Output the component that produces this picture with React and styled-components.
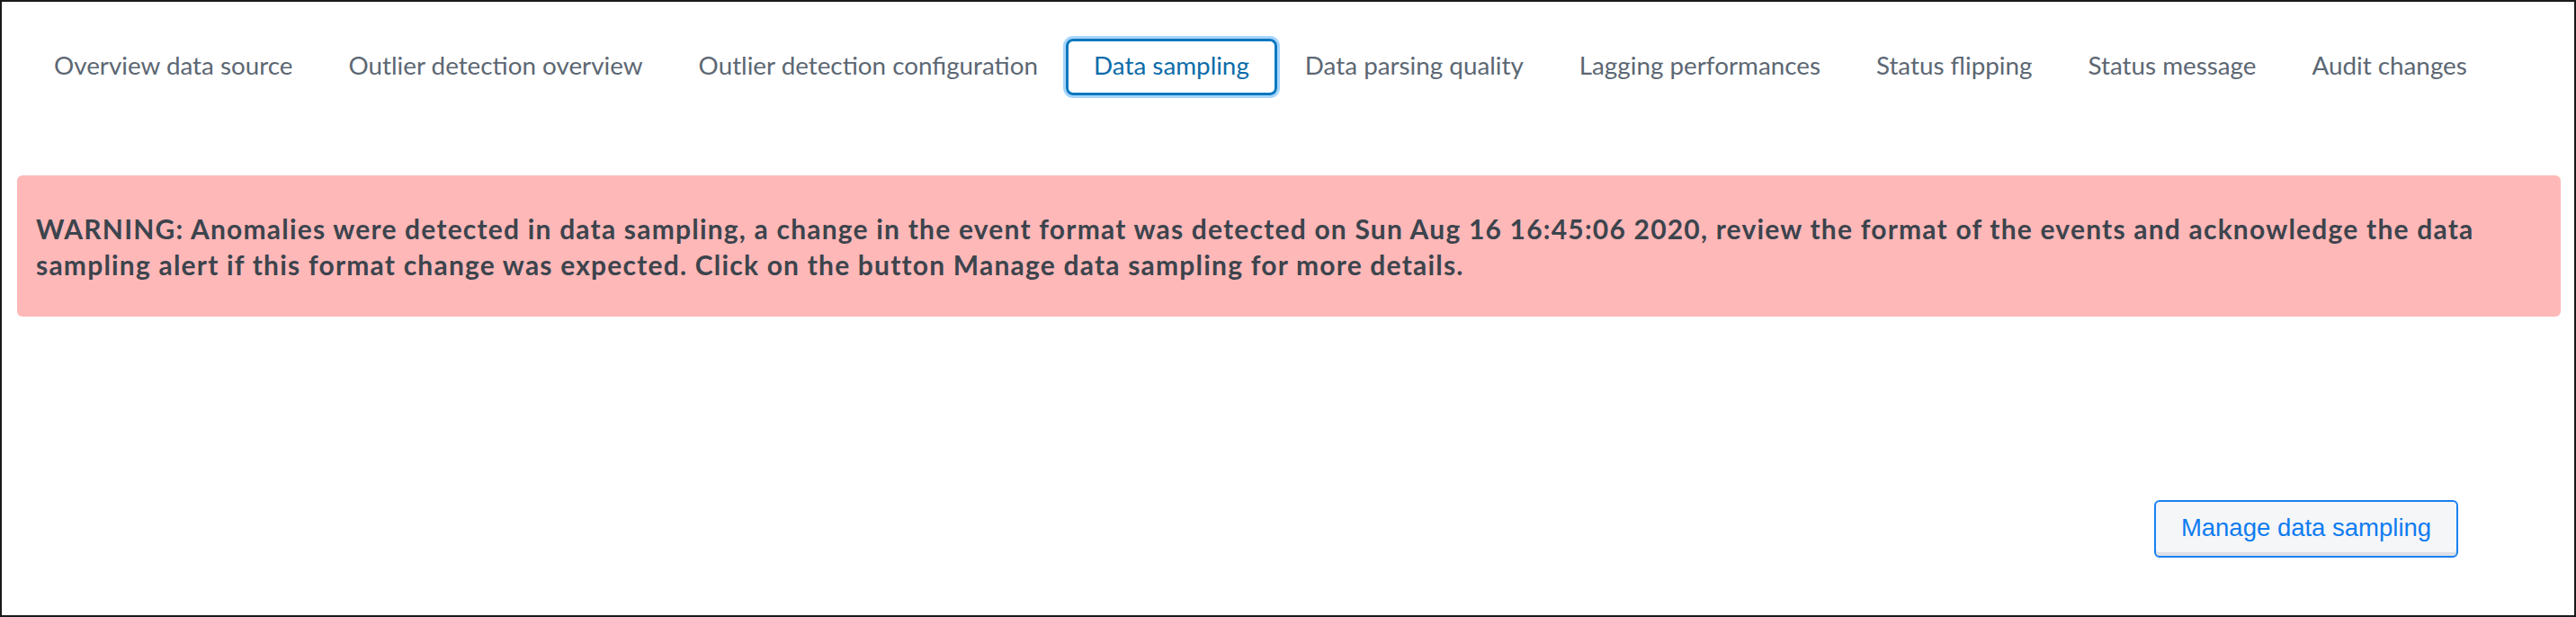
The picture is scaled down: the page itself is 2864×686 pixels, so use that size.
import React from "react";
import styled, { createGlobalStyle } from "styled-components";

const GlobalStyle = createGlobalStyle`
  html, body {
    margin: 0;
    padding: 0;
    background: #fff;
  }
`;

const Page = styled.div`
  box-sizing: border-box;
  width: 2864px;
  height: 686px;
  border: 2px solid #1a1a1a;
  background: #fff;
  font-family: Lato, "Open Sans", sans-serif;
  display: flex;
  flex-direction: column;
`;

const TabBar = styled.nav`
  display: flex;
  align-items: center;
  padding: 41px 0 0 27px;
`;

const Tab = styled.div`
  box-sizing: border-box;
  height: 63px;
  padding: 0 28px 4px;
  display: flex;
  align-items: center;
  font-size: 27.8px;
  color: ${(props) => (props.active ? "#0b6ca9" : "#5c6773")};
  border: 3px solid ${(props) => (props.active ? "#0a78bf" : "transparent")};
  border-radius: 8px;
  box-shadow: ${(props) =>
    props.active ? "0 0 0 3px rgba(94, 178, 250, 0.55)" : "none"};
  white-space: nowrap;
  cursor: pointer;
`;

const Alert = styled.div`
  margin: 89px 15px 0 17px;
  padding: 39px 22px 38px 21px;
  background: #ffb8b8;
  border-radius: 6px;
  color: #3c444d;
  font-weight: 700;
  font-size: 30px;
  letter-spacing: 1.2px;
  line-height: 40px;
`;

const Actions = styled.div`
  display: flex;
  justify-content: flex-end;
  padding: 0 129px 0 0;
  margin-top: 204px;
`;

const Button = styled.button`
  box-sizing: border-box;
  width: 338px;
  height: 64px;
  background: #f5f6f8;
  border: 2px solid #1a80f2;
  border-radius: 6px;
  box-shadow: inset 0 -4px 0 #dde0e5;
  color: #0f7cf0;
  font-family: "Liberation Sans", Arial, sans-serif;
  font-size: 27.5px;
  padding: 0 0 2px;
  cursor: pointer;
`;

const tabs = [
  { name: "Overview data source" },
  { name: "Outlier detection overview" },
  { name: "Outlier detection configuration" },
  { name: "Data sampling", active: true },
  { name: "Data parsing quality" },
  { name: "Lagging performances" },
  { name: "Status flipping" },
  { name: "Status message" },
  { name: "Audit changes" },
];

export const App = () => {
  return (
    <>
      <GlobalStyle />
      <Page>
        <TabBar>
          {tabs.map((t) => (
            <Tab key={t.name} active={t.active}>
              {t.name}
            </Tab>
          ))}
        </TabBar>
        <Alert>
          WARNING: Anomalies were detected in data sampling, a change in the
          event format was detected on Sun Aug 16 16:45:06 2020, review the
          format of the events and acknowledge the data sampling alert if this
          format change was expected. Click on the button Manage data sampling
          for more details.
        </Alert>
        <Actions>
          <Button>Manage data sampling</Button>
        </Actions>
      </Page>
    </>
  );
};

export default App;
